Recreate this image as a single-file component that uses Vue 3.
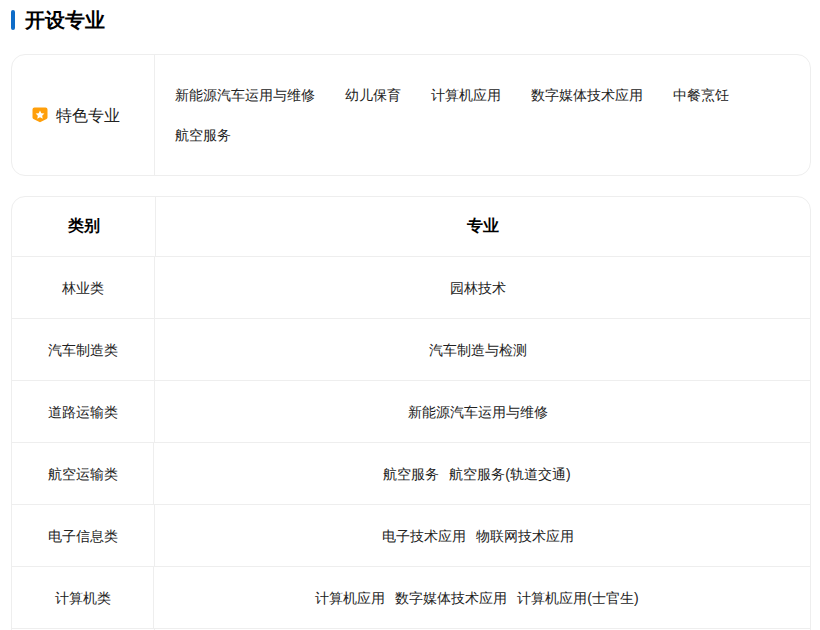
<script setup>
const tags = ['新能源汽车运用与维修', '幼儿保育', '计算机应用', '数字媒体技术应用', '中餐烹饪', '航空服务']
const rows = [
  { name: '林业类', col: 'w143', items: ['园林技术'] },
  { name: '汽车制造类', col: 'w143', items: ['汽车制造与检测'] },
  { name: '道路运输类', col: 'w143', items: ['新能源汽车运用与维修'] },
  { name: '航空运输类', col: 'w142', items: ['航空服务', '航空服务(轨道交通)'] },
  { name: '电子信息类', col: 'w143', items: ['电子技术应用', '物联网技术应用'] },
  { name: '计算机类', col: 'w142', items: ['计算机应用', '数字媒体技术应用', '计算机应用(士官生)'] },
  { name: '', col: 'w143', items: [] }
]
</script>

<template>
  <div class="page">
    <h2 class="title"><span class="bar"></span><span>开设专业</span></h2>
    <section class="feature">
      <div class="feature-label">
        <svg class="badge" width="16" height="16" viewBox="0 0 16 16">
          <path d="M2.500.5h11A2 2 0 0 1 15.500 2.500v8a1.500 1.500 0 0 1-.9 1.400L8 15.200l-6.600-3.300a1.500 1.500 0 0 1-.9-1.400v-8A2 2 0 0 1 2.500.5z" fill="#ff9f0a"/>
          <path d="M8 3.400l1.350 2.800 3.050.4-2.250 2.100.6 3L8 10.250l-2.750 1.450.6-3L3.600 6.600l3.050-.4z" fill="#fff"/>
        </svg>
        <span class="feature-text">特色专业</span>
      </div>
      <div class="tags">
        <span v-for="t in tags" :key="t" class="tag">{{ t }}</span>
      </div>
    </section>
    <section class="table">
      <div class="row head">
        <div class="cat w144">类别</div>
        <div class="majors">专业</div>
      </div>
      <div v-for="(r, i) in rows" :key="i" class="row">
        <div class="cat" :class="r.col">{{ r.name }}</div>
        <div class="majors">
          <span v-for="m in r.items" :key="m" class="major">{{ m }}</span>
        </div>
      </div>
    </section>
  </div>
</template>

<style>
html, body { margin: 0; background: #fff; overflow: hidden; }
</style>

<style scoped>
.page {
  width: 800px;
  height: 630px;
  padding-left: 11px;
  overflow: hidden;
  font-family: "Liberation Sans", sans-serif;
  color: #222;
}
.title {
  display: flex;
  align-items: center;
  gap: 10px;
  margin: 0;
  padding-top: 10px;
  height: 20px;
  font-size: 20px;
  line-height: 20px;
  font-weight: 700;
  color: #000;
}
.bar {
  width: 4px;
  height: 20px;
  border-radius: 2px;
  background: #0f6cc8;
}
.feature {
  display: flex;
  box-sizing: border-box;
  width: 800px;
  height: 122px;
  margin-top: 24px;
  border: 1px solid #eee;
  border-radius: 14px;
}
.feature-label {
  display: flex;
  align-items: center;
  gap: 8px;
  box-sizing: border-box;
  flex: 0 0 143px;
  padding-left: 20px;
  border-right: 1px solid #eee;
  font-size: 16px;
}
.feature-text {
  padding-top: 2px;
}
.tags {
  display: flex;
  flex-wrap: wrap;
  align-content: center;
  column-gap: 30px;
  padding-left: 20px;
  font-size: 14px;
  line-height: 40px;
}
.table {
  box-sizing: border-box;
  width: 800px;
  margin-top: 20px;
  border: 1px solid #eee;
  border-radius: 14px;
}
.row {
  display: flex;
  box-sizing: border-box;
  height: 62px;
  border-bottom: 1px solid #eee;
  font-size: 14px;
}
.row.head {
  height: 60px;
  font-size: 16px;
  font-weight: 700;
  color: #000;
}
.cat {
  display: flex;
  align-items: center;
  justify-content: center;
  box-sizing: border-box;
  padding-top: 2px;
  border-right: 1px solid #eee;
}
.head .cat,
.head .majors {
  padding-top: 0;
}
.w142 { flex: 0 0 142px; }
.w143 { flex: 0 0 143px; }
.w144 { flex: 0 0 144px; }
.majors {
  display: flex;
  flex: 1;
  align-items: center;
  justify-content: center;
  padding-top: 2px;
}
.major {
  margin-right: 10px;
}
</style>
